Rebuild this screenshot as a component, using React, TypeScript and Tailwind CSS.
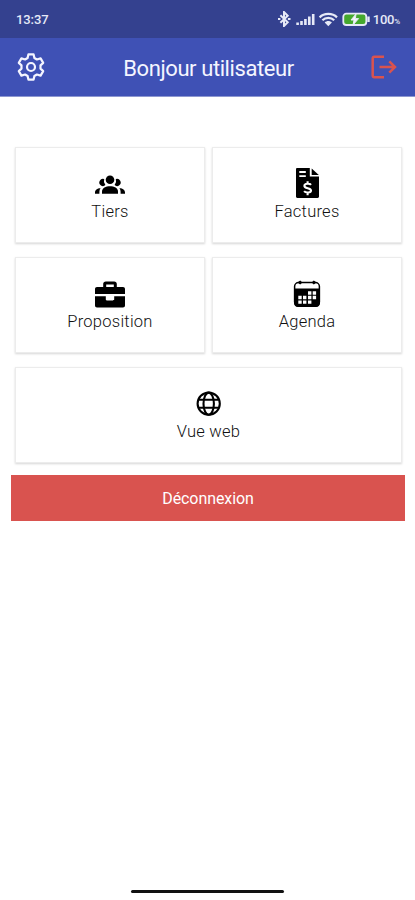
import React from "react";

interface MenuCardProps {
  label: string;
  icon: React.ReactNode;
  className?: string;
}

function MenuCard({ label, icon, className = "" }: MenuCardProps) {
  return (
    <button
      className={`flex h-[96px] flex-col items-center border border-[#ececec] bg-white pt-[19px] shadow-[0_1px_2px_rgba(0,0,0,0.16)] ${className}`}
    >
      <span className="flex h-[32px] items-center justify-center text-black">{icon}</span>
      <span className="mt-[2px] text-[16.5px] leading-[22px] font-light tracking-[0.25px] text-[#111]">{label}</span>
    </button>
  );
}

function SettingsIcon() {
  return (
    <svg
      width="30"
      height="30"
      viewBox="-15 -15 30 30"
      fill="none"
      stroke="currentColor"
      strokeWidth="2.2"
      strokeLinejoin="round"
    >
      <path d="M-2.6-12.6H2.6L3.4-9 5.9-7.5 9.6-8.6 12.2-4.1 9.5-1.6V1.6L12.2 4.1 9.6 8.6 5.9 7.5 3.4 9 2.6 12.6H-2.6L-3.4 9-5.9 7.5-9.6 8.6-12.2 4.1-9.5 1.6V-1.6L-12.2-4.1-9.6-8.6-5.9-7.5-3.4-9z" />
      <circle r="4" />
    </svg>
  );
}

function GroupIcon() {
  return (
    <svg width="30" height="20" viewBox="0 0 30 20" fill="currentColor" className="mt-[4px]">
      <circle cx="15" cy="4.8" r="4.3" />
      <path d="M7 18.7v-2.2c0-3.3 3.9-5.2 8-5.2s8 1.9 8 5.2v2.2z" />
      <path d="M9.2 4.1a3.6 3.6 0 1 0 1.2 6 6.2 6.2 0 0 1-1.2-6z" />
      <path d="M20.8 4.1a3.6 3.6 0 1 1-1.2 6 6.2 6.2 0 0 0 1.2-6z" />
      <path d="M5.6 13.3C2 13.3 0 15.2 0 17.6v1.1h4.4v-2c0-1.3.4-2.4 1.2-3.4z" />
      <path d="M24.4 13.3c3.6 0 5.6 1.9 5.6 4.3v1.1h-4.4v-2c0-1.3-.4-2.4-1.2-3.4z" />
    </svg>
  );
}

function InvoiceIcon() {
  return (
    <svg width="23" height="30" viewBox="0 0 23 30" fill="currentColor">
      <path d="M1.4 0h12.4v8.6H23v20c0 .9-.5 1.4-1.4 1.4H1.4C.5 30 0 29.5 0 28.6V1.4C0 .5.5 0 1.4 0z" />
      <path d="M15.7.4 22.8 7.1H15.7z" />
      <path d="M3.3 4h6.5M3.3 8.1h6.5" fill="none" stroke="white" strokeWidth="1.9" />
      <path
        d="M15 16.8c-1-1.3-6.6-1.7-6.6 1.1 0 2.9 6.6 1.6 6.6 4.6 0 2.7-5.5 2.5-6.9.7M11.6 13.3V16M11.6 24.5v2.7"
        fill="none"
        stroke="white"
        strokeWidth="2.1"
      />
    </svg>
  );
}

function BriefcaseIcon() {
  return (
    <svg width="30" height="27" viewBox="0 0 30 27" fill="currentColor" className="mt-[2px]">
      <path
        fillRule="evenodd"
        d="M8.2 6V3c0-1.6 1-2.6 2.6-2.6h8.4c1.6 0 2.6 1 2.6 2.6v3H28c1.2 0 2 .8 2 2v5H0V8c0-1.2.8-2 2-2zm3 0h7.6V3.4h-7.6z"
      />
      <path d="M0 15.2h10.8v3c0 .8.4 1.2 1.2 1.2h6c.8 0 1.2-.4 1.2-1.2v-3H30v9.2c0 1.2-.8 2-2 2H2c-1.2 0-2-.8-2-2z" />
    </svg>
  );
}

function CalendarIcon() {
  return (
    <svg width="28" height="28" viewBox="0 0 28 28" className="mt-[2px]">
      <rect x="1.6" y="2.5" width="24.8" height="23.6" rx="4" fill="white" stroke="currentColor" strokeWidth="1.5" />
      <path d="M1 8.6h26v14.2c0 2.6-1.4 4.2-4 4.2H5c-2.6 0-4-1.6-4-4.2z" fill="currentColor" />
      <path d="M4.4 2.5 7.2.5l2.2 2-2.2 2zM18.6 2.5l2.2-2 2.8 2-2.8 2z" fill="currentColor" />
      <path
        d="M15 11.3h3.4v3.4H15zM19.7 11.3h3.4v3.4h-3.4zM5.3 15.8h3.4v3.4H5.3zM10 15.8h3.4v3.4H10zM15 15.8h3.4v3.4H15zM19.7 15.8h3.4v3.4h-3.4zM5.3 20.4h3.4v3.4H5.3zM10 20.4h3.4v3.4H10zM15 20.4h3.4v3.4H15z"
        fill="white"
      />
    </svg>
  );
}

function GlobeIcon() {
  return (
    <svg
      width="26"
      height="26"
      viewBox="0 0 26 26"
      fill="none"
      stroke="currentColor"
      strokeWidth="2.1"
      className="mt-[1px]"
    >
      <circle cx="12.7" cy="12.7" r="11.1" />
      <ellipse cx="12.7" cy="12.7" rx="5.2" ry="11.1" />
      <path d="M2.5 8.8h20.4M2.5 16.8h20.4" />
    </svg>
  );
}

function LogoutIcon() {
  return (
    <svg width="26" height="24" viewBox="0 0 26 24" fill="none" stroke="currentColor" strokeWidth="2.5">
      <path d="M13 1.7H3.4c-1 0-1.7.7-1.7 1.7v17.2c0 1 .7 1.7 1.7 1.7H13" />
      <path d="M8.5 12h15.3M18.3 6.4 24 12l-5.7 5.6" />
    </svg>
  );
}

function StatusIcons() {
  return (
    <svg width="94" height="16" viewBox="0 0 94 16" fill="none" stroke="#e6e9f7">
      {/* bluetooth */}
      <path d="m2.4 4.3 7.3 7L6 15V1l3.7 3.7-7.3 7" strokeWidth="2" />
      <path d="M0 8h2.4M9.9 8h2.6" strokeWidth="2.2" />
      {/* signal */}
      <path d="M19.6 14v-2.5M23.5 14v-4M27.4 14V8M31.3 14V5.5M35.2 14V3" strokeWidth="2.6" />
      {/* wifi */}
      <path d="M41.6 6.4c4.6-4.6 12.8-4.6 17.4 0M44.4 9.2c3.2-3.2 8.6-3.2 11.8 0" strokeWidth="2.2" />
      <path d="m46.7 11.4 3.6 3.8 3.6-3.8c-2-2-5.2-2-7.2 0z" fill="#e6e9f7" stroke="none" />
      {/* battery */}
      <rect x="65.3" y="2.7" width="23" height="11.3" rx="3" fill="#45a82e" strokeWidth="1.8" />
      <path d="M90.5 5.5V11" strokeWidth="2.4" />
      <path d="m78 3-5 6h3l-1 5 5.6-6.4h-3.2z" fill="#f4f6fb" strokeWidth="1" />
    </svg>
  );
}

export default function App() {
  return (
    <div className="flex h-[900px] w-full flex-col bg-white font-[Roboto,sans-serif]">
      <div className="flex h-[38px] items-center justify-between bg-[#34418f] pr-[15px] pl-[16px] text-[#e6e9f7]">
        <span className="pt-[2px] text-[13px] font-medium tracking-[-0.1px]">13:37</span>
        <div className="flex items-center">
          <StatusIcons />
          <span className="ml-[1px] pt-[2px] text-[13px] font-medium tracking-[-0.2px]">
            100<span className="text-[8px]">%</span>
          </span>
        </div>
      </div>

      <header className="flex h-[59px] items-center justify-between border-b border-[#8d97d0] bg-[#3f51b5] pr-[18px] pl-[16px]">
        <span className="text-[#f4f5ff]">
          <SettingsIcon />
        </span>
        <h1 className="pt-[4px] text-[22px] leading-[28px] tracking-[-0.42px] text-[#f4f5ff]">Bonjour utilisateur</h1>
        <span className="text-[#d9534f]">
          <LogoutIcon />
        </span>
      </header>

      <main className="flex flex-1 flex-col px-[11px] pt-[50px]">
        <div className="grid grid-cols-2 gap-x-[7px] gap-y-[14px] pr-[2px] pl-[4px]">
          <MenuCard label="Tiers" icon={<GroupIcon />} />
          <MenuCard label="Factures" icon={<InvoiceIcon />} />
          <MenuCard label="Proposition" icon={<BriefcaseIcon />} />
          <MenuCard label="Agenda" icon={<CalendarIcon />} />
          <MenuCard label="Vue web" icon={<GlobeIcon />} className="col-span-2" />
        </div>
        <button className="mt-[12px] -mr-[1px] h-[46px] bg-[#d9534f] pt-[2px] text-[16px] tracking-[-0.08px] text-white">
          Déconnexion
        </button>
      </main>

      <div className="mb-[7px] h-[3px] w-[153px] self-center rounded-full bg-[#111]" />
    </div>
  );
}
